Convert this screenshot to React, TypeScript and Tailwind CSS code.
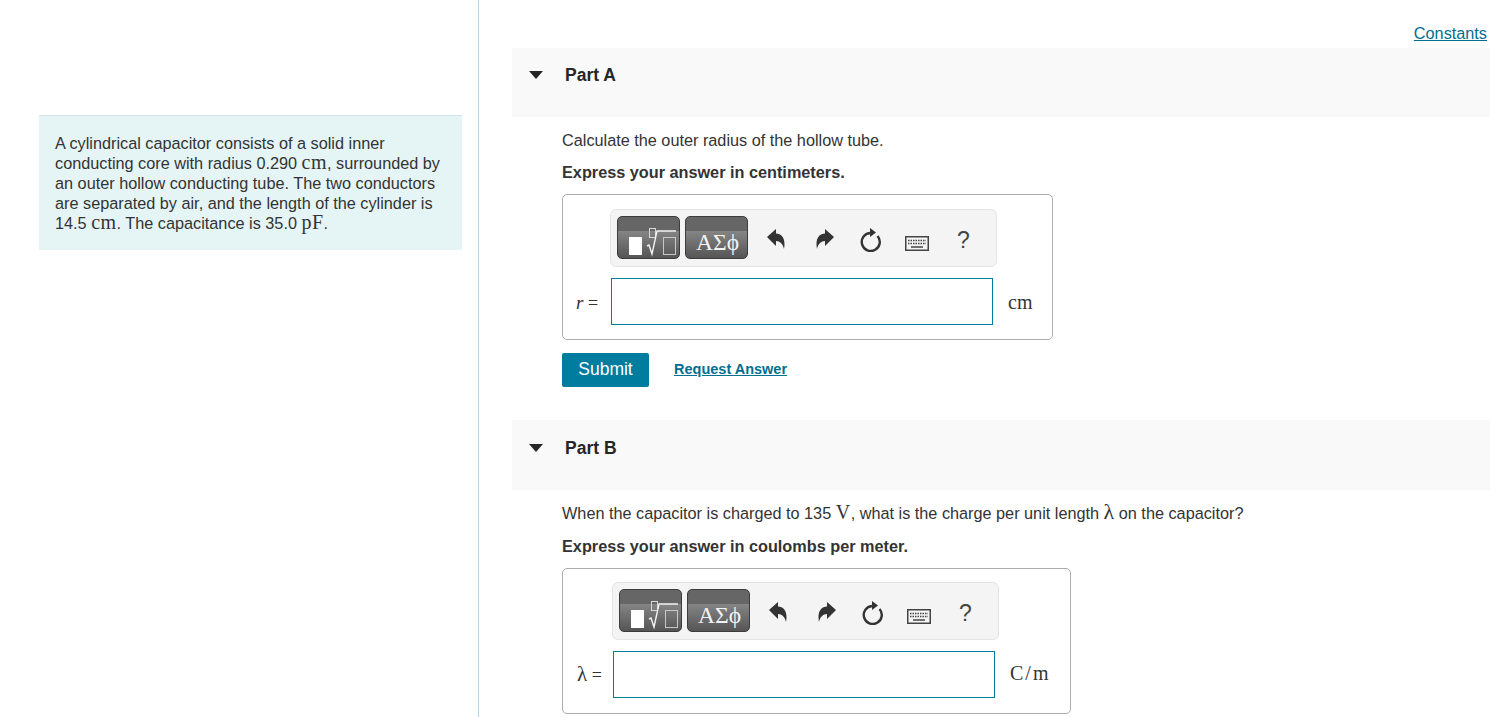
import React from 'react';

const MathText = ({ children }: { children: React.ReactNode }) => (
  <span className="font-['Liberation_Serif',serif] text-[20px] leading-[0] tracking-[0.5px]">{children}</span>
);

const PartHeader = ({ title, size }: { title: string; size: string }) => (
  <div className={`flex bg-[#f9f9f9] ${size}`}>
    <svg width="14" height="8" viewBox="0 0 14 8" className="ml-[17px] mt-[8px] fill-[#262626]">
      <path d="M0 0H14L7 8Z" />
    </svg>
    <h2 className="ml-[22px] mt-[1px] text-[17.5px] leading-[22px] font-bold text-[#262626]">{title}</h2>
  </div>
);

const TemplatesIcon = () => (
  <svg width="61" height="41" viewBox="0 0 61 41" className="absolute left-0 top-0 fill-none">
    <rect x="11" y="20" width="13" height="18" className="fill-white" />
    <rect x="31.5" y="11.5" width="6" height="9" className="stroke-[#d8d8d8]" />
    <path d="M29 29l2-1 3 9 5-23h19" className="stroke-[#f2f2f2]" strokeWidth="1.4" />
    <rect x="45.5" y="20.5" width="12" height="17" className="stroke-[#c8c8c8]" />
  </svg>
);

const ToolButton = ({ children, width }: { children: React.ReactNode; width: string }) => (
  <div className={`relative mb-[2px] h-[43px] overflow-hidden rounded-[5px] border border-[#3c3c3c] bg-[linear-gradient(#666_0,#666_34%,#858585_34%,#555_100%)] ${width}`}>
    {children}
  </div>
);

const Toolbar = ({ offset }: { offset: string }) => (
  <div className={`flex h-[58px] w-[387px] items-center rounded-[6px] border border-[#e4e4e4] bg-[#f4f4f4] pl-[6px] ${offset}`}>
    <ToolButton width="w-[63px]">
      <TemplatesIcon />
    </ToolButton>
    <div className="ml-[5px]">
      <ToolButton width="w-[63px]">
        <span className="absolute inset-x-0 top-[11px] pl-[2px] text-center font-['Liberation_Serif',serif] text-[23.5px] leading-[28px] text-[#f2f2f2]">
          ΑΣϕ
        </span>
      </ToolButton>
    </div>
    <svg width="18" height="20" viewBox="0 0 18 20" className="ml-[19px] mt-[2px] fill-[#333]">
      <path d="M0 8L9 0V4.5C15 4.5 19 10 17 20C16 15 13 12 9 12V17Z" />
    </svg>
    <svg width="18" height="20" viewBox="0 0 18 20" className="ml-[31px] mt-[2px] fill-[#333]">
      <path d="M18 8L9 0V4.5C3 4.5 -1 10 1 20C2 15 5 12 9 12V17Z" />
    </svg>
    <svg width="22" height="24" viewBox="0 0 22 24" className="ml-[26px] mt-[4px] fill-none stroke-[#333]">
      <path d="M17.5 8A9 9 0 1 1 10 5" strokeWidth="2.4" />
      <path d="M10 0L16 4.5L10 9Z" className="fill-[#333] stroke-none" />
    </svg>
    <svg width="24" height="16" viewBox="0 0 24 16" className="ml-[23px] mt-[12px]">
      <rect x="0.75" y="0.75" width="22.5" height="13.5" className="fill-[#f4f4f4] stroke-[#444]" strokeWidth="1.5" />
      <path d="M3 4.5h18M3 7.5h18" className="stroke-[#444]" strokeWidth="1.5" strokeDasharray="1.5 1" />
      <path d="M6 11h12" className="stroke-[#444]" strokeWidth="1.5" />
    </svg>
    <span className="ml-[28px] mt-[4px] text-[23px] leading-none text-[#444]">?</span>
  </div>
);

const AnswerBox = ({
  width,
  offset,
  labelWidth,
  pad,
  label,
  unit,
}: {
  width: string;
  offset: string;
  labelWidth: string;
  pad: string;
  label: React.ReactNode;
  unit: React.ReactNode;
}) => (
  <div className={`h-[146px] rounded-[5px] border border-[#acacac] ${pad} ${width}`}>
    <Toolbar offset={offset} />
    <div className="mt-[11px] flex items-center">
      <div className={`flex h-[47px] items-center justify-center text-[#333] ${labelWidth}`}>{label}</div>
      <div className="h-[47px] w-[382px] border border-[#007c9e] bg-white" />
      <div className="ml-[15px] font-['Liberation_Serif',serif] text-[20px] leading-none text-[#333]">{unit}</div>
    </div>
  </div>
);

export default function App() {
  return (
    <div className="flex h-[717px] overflow-hidden bg-white font-['Liberation_Sans',sans-serif] text-[16.25px] text-[#333]">
      <aside className="w-[479px] shrink-0 border-r border-[#bcd3e6] pl-[39px] pr-[16px] pt-[115px]">
        <div className="h-[135px] border-t border-[#d5e5ea] bg-[#e5f5f6] px-[16px] pt-[17px] leading-[20px]">
          <p>
            A cylindrical capacitor consists of a solid inner conducting core with radius 0.290 <MathText>cm</MathText>, surrounded by an outer hollow conducting tube. The two conductors are separated by air, and the length of the cylinder is 14.5 <MathText>cm</MathText>. The capacitance is 35.0 <MathText>pF</MathText>.
          </p>
        </div>
      </aside>

      <main className="flex-1 pl-[33px] pr-[18px]">
        <div className="h-[48px] pr-[3px] pt-[24px] text-right leading-[18px]">
          <a className="text-[#006f8e] underline">Constants</a>
        </div>

        <PartHeader title="Part A" size="h-[69px] pt-[15px]" />
        <div className="pl-[50px]">
          <p className="mt-[13px] leading-[20px]">Calculate the outer radius of the hollow tube.</p>
          <p className="mt-[12px] font-bold leading-[20px]">Express your answer in centimeters.</p>
          <div className="mt-[12px]">
            <AnswerBox
              width="w-[491px]"
              offset="ml-[47px]"
              labelWidth="w-[48px]"
              pad="pt-[14px]"
              label={<span className="mt-[3px] font-['Liberation_Serif',serif] text-[18px]"><i className="text-[19px]">r</i> =</span>}
              unit="cm"
            />
          </div>
          <div className="mt-[13px] flex items-center">
            <button className="h-[34px] w-[87px] rounded-[2px] bg-[#007c9e] pb-[2px] text-[17.5px] text-white">Submit</button>
            <a className="ml-[25px] text-[14.5px] font-bold text-[#006f8e] underline">Request Answer</a>
          </div>
        </div>

        <div className="mt-[33px]">
          <PartHeader title="Part B" size="h-[70px] pt-[16px]" />
        </div>
        <div className="pl-[50px]">
          <p className="mt-[13px] leading-[20px]">
            When the capacitor is charged to 135 <MathText>V</MathText>, what is the charge per unit length <span className="font-['Liberation_Serif',serif] text-[22px] leading-[0]">λ</span> on the capacitor?
          </p>
          <p className="mt-[13px] font-bold leading-[20px]">Express your answer in coulombs per meter.</p>
          <div className="mt-[12px]">
            <AnswerBox
              width="w-[509px]"
              offset="ml-[49px]"
              labelWidth="w-[50px]"
              pad="pt-[13px]"
              label={<span className="pl-[3px] font-['Liberation_Serif',serif] text-[18px]"><span className="text-[21px]">λ</span> =</span>}
              unit={<span className="block -mt-[4px] tracking-[2px]">C/m</span>}
            />
          </div>
        </div>
      </main>
    </div>
  );
}
